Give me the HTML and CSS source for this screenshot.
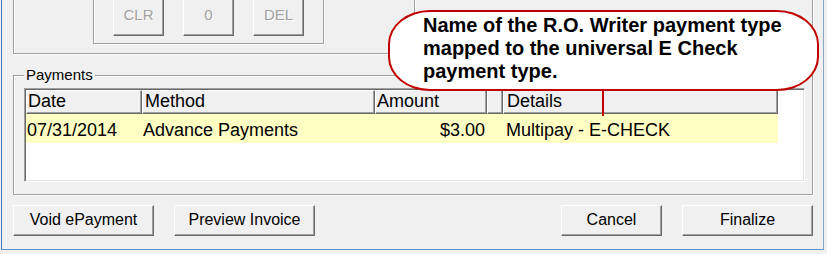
FILE: index.html
```html
<!DOCTYPE html>
<html>
<head>
<meta charset="utf-8">
<link rel="stylesheet" href="styles.css">
</head>
<body>
<div class="window">
  <div class="top">
    <div class="keypad-outer">
      <div class="keypad-inner">
        <div class="kbtn">CLR</div>
        <div class="kbtn">0</div>
        <div class="kbtn">DEL</div>
      </div>
    </div>
    <div class="right-box"></div>
  </div>

  <div class="group">
    <span class="group-label">Payments</span>
    <div class="listview">
      <div class="lv-row lv-head">
        <div class="hc c-date">Date</div>
        <div class="hc c-method">Method</div>
        <div class="hc c-amount">Amount</div>
        <div class="hc c-blank"></div>
        <div class="hc c-details">Details</div>
      </div>
      <div class="lv-row lv-item">
        <div class="ic c-date">07/31/2014</div>
        <div class="ic c-method">Advance Payments</div>
        <div class="ic c-amount amt">$3.00</div>
        <div class="ic c-blank"></div>
        <div class="ic c-details">Multipay - E-CHECK</div>
      </div>
    </div>
  </div>

  <div class="actions">
    <div class="btn w140">Void ePayment</div>
    <div class="btn w140">Preview Invoice</div>
    <div class="spacer"></div>
    <div class="btn w100">Cancel</div>
    <div class="btn w130">Finalize</div>
  </div>

  <div class="callout">
    Name of the R.O. Writer payment type<br>
    mapped to the universal E Check<br>
    payment type.
    <span class="pointer"></span>
  </div>
</div>
</body>
</html>
```

FILE: styles.css
```css
html, body {
  margin: 0;
  padding: 0;
}
body {
  background: #f0f0f0;
  width: 827px;
  height: 254px;
  overflow: hidden;
  font-family: "Liberation Sans", Arial, sans-serif;
  color: #000;
}
.window {
  position: relative;
  display: flow-root;
  overflow: hidden;
  box-sizing: border-box;
  margin-left: 1px;
  width: 823px;
  height: 250px;
  border-left: 1px solid #3a78c2;
  border-right: 1px solid #8aa4c4;
  border-bottom: 1px solid #5a92d0;
  background: #f0f0f0;
}

/* top keypad area */
.top {
  display: flex;
  align-items: flex-start;
  height: 84px;
  margin-top: -30px;
}
.keypad-outer {
  box-sizing: border-box;
  width: 402px;
  margin-left: 11px;
  border: 1px solid #a0a0a0;
  box-shadow: 1px 1px 0 #fff, inset 1px 1px 0 #fff;
  padding: 0 0 9px 79px;
}
.keypad-inner {
  box-sizing: border-box;
  width: 231px;
  border: 1px solid #a0a0a0;
  box-shadow: 1px 1px 0 #fff, inset 1px 1px 0 #fff;
  padding: 24px 0 7px 19px;
  display: flex;
  gap: 19px;
}
.kbtn {
  box-sizing: border-box;
  width: 51px;
  height: 40px;
  background: #f0f0f0;
  border-top: 1px solid #fff;
  border-left: 1px solid #fff;
  border-right: 1px solid #696969;
  border-bottom: 1px solid #696969;
  box-shadow: inset -1px -1px 0 #a0a0a0;
  color: #a0a0a0;
  text-shadow: 1px 1px 0 #fff;
  font-size: 15px;
  display: flex;
  align-items: flex-end;
  justify-content: center;
  padding-bottom: 12px;
}
.right-box {
  box-sizing: border-box;
  width: 398px;
  height: 84px;
  border: 1px solid #a0a0a0;
  border-left: none;
  box-shadow: 1px 1px 0 #fff;
}

/* payments group */
.group {
  position: relative;
  box-sizing: border-box;
  width: 800px;
  height: 120px;
  margin: 21px 0 0 11px;
  border: 1px solid #a0a0a0;
  box-shadow: 1px 1px 0 #fff, inset 1px 1px 0 #fff;
  padding: 12px 7px 0 10px;
}
.group-label {
  position: absolute;
  left: 10px;
  top: -10px;
  padding: 0 2px;
  background: #f0f0f0;
  font-size: 15px;
  line-height: 18px;
}
.listview {
  box-sizing: border-box;
  height: 94px;
  background: #fff;
  border: 1px solid;
  border-color: #a0a0a0 #fff #fff #a0a0a0;
  box-shadow: inset 1px 1px 0 #696969, inset -1px -1px 0 #e3e3e3;
  padding: 1px 0 0 1px;
}
.lv-row {
  display: flex;
  font-size: 18px;
}
.lv-head .hc {
  box-sizing: border-box;
  height: 24px;
  line-height: 21px;
  background: #f0f0f0;
  border-top: 1px solid #fff;
  border-left: 1px solid #fff;
  border-right: 1px solid #696969;
  border-bottom: 1px solid #696969;
  box-shadow: inset -1px -1px 0 #a0a0a0;
  padding-left: 1px;
  white-space: nowrap;
}
.c-date { width: 116px; }
.c-method { width: 233px; }
.c-amount { width: 112px; }
.c-blank { width: 16px; }
.c-details { width: 275px; }
.lv-head .c-method { padding-left: 2px; }
.lv-head .c-details { padding-left: 3px; }
.lv-item {
  width: 752px;
  background: #ffffc4;
}
.lv-item .ic {
  box-sizing: border-box;
  height: 29px;
  line-height: 26px;
  padding: 3px 0 0 1px;
  white-space: nowrap;
}
.lv-item .amt {
  text-align: right;
  padding-right: 2px;
}
.lv-item .c-details { padding-left: 3px; }

/* bottom buttons */
.actions {
  display: flex;
  margin: 10px 0 0 11px;
  width: 800px;
  gap: 20px;
}
.spacer { flex: 1; }
.btn {
  box-sizing: border-box;
  height: 31px;
  background: #f0f0f0;
  border-top: 1px solid #fff;
  border-left: 1px solid #fff;
  border-right: 1px solid #696969;
  border-bottom: 1px solid #696969;
  box-shadow: inset -1px -1px 0 #a0a0a0;
  font-size: 16px;
  display: flex;
  align-items: center;
  justify-content: center;
  padding-bottom: 1px;
}
.w140 { width: 141px; }
.w100 { width: 101px; }
.w130 { width: 131px; }

/* callout bubble */
.callout {
  position: absolute;
  left: 386px;
  top: 10px;
  box-sizing: border-box;
  width: 431px;
  height: 81px;
  border: 2px solid #c00000;
  border-radius: 42px / 34px;
  background: #fff;
  padding: 2px 0 0 33px;
  font-size: 20px;
  font-weight: bold;
  line-height: 23px;
  white-space: nowrap;
}
.pointer {
  position: absolute;
  left: 212px;
  top: 77px;
  width: 2px;
  height: 27px;
  background: #c00000;
}
```
